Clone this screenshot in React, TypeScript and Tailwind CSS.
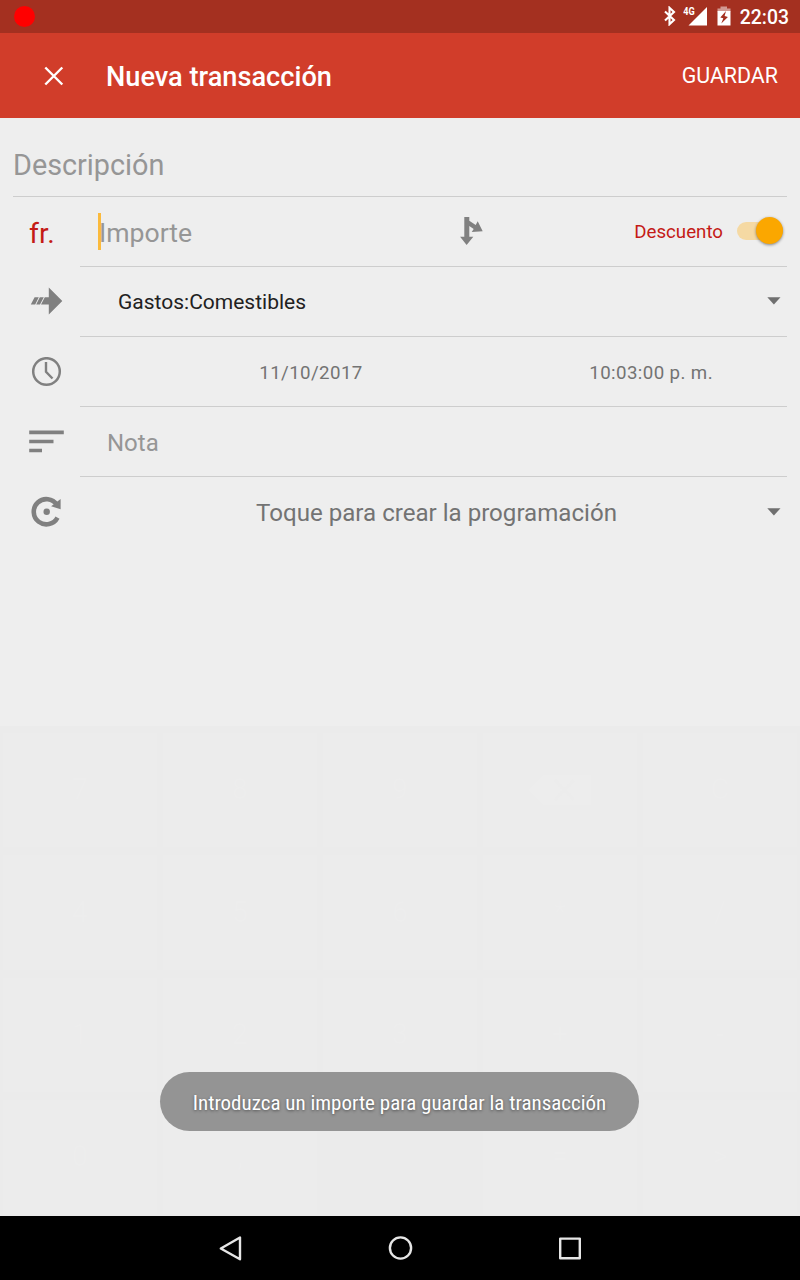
import type { ReactNode } from 'react';

const keys = ['7', '8', '9', 'back', 'C', '4', '5', '6', '*', '/', '1', '2', '3', '+', '-', '0', ',', '', '=', '>'];

function StatusBar() {
  return (
    <div className="flex h-[33px] shrink-0 items-center justify-between bg-[#a43020] pl-[13.5px] pr-[11px]">
      <div className="h-[21px] w-[21px] rounded-full bg-[#ff0000]" />
      <div className="flex items-center">
        <svg className="-mt-px mr-[6px] h-[20px] w-[14px]" viewBox="0 0 14 20">
          <path d="M2 5.5 11 14 6.5 18.2V1.8L11 6 2 14.5" fill="none" stroke="#fff" strokeWidth="2.1" />
        </svg>
        <svg className="-mt-px mr-[9px] h-[22px] w-[25px]" viewBox="0 0 25 22">
          <path d="M5.5 20.5H24V2Z" fill="#fff" />
          <path d="M0 0H12V11.5H0Z" fill="#a43020" />
          <text x="0.3" y="9.9" fontSize="10.6" fontWeight="700" fill="#fff" fontFamily="Roboto, sans-serif" textLength="11.5" lengthAdjust="spacingAndGlyphs">4G</text>
        </svg>
        <svg className="-mt-px mr-[8.5px] h-[20px] w-[14px]" viewBox="0 0 14 20">
          <path d="M3.5 0.5h6.5v2h3.5v3H0.5v-3h3z" fill="#d19a92" />
          <path d="M0.5 5h13v14.5H0.5z" fill="#fff" />
          <path d="M9 5 3.3 11.5 6.3 12.2 4.3 17.5 10.9 10.9 7.6 10Z" fill="#a43020" />
        </svg>
        <span className="mt-[2px] text-[19.4px] font-medium leading-none text-white">22:03</span>
      </div>
    </div>
  );
}

function AppBar() {
  return (
    <header className="flex h-[85px] shrink-0 items-center bg-[#d13d2a] pl-[44px] pr-[22px] text-white">
      <svg className="h-5 w-5" viewBox="0 0 20 20">
        <path d="M1.3 1.5 18.3 18.5M18.3 1.5 1.3 18.5" stroke="#fff" strokeWidth="2.4" />
      </svg>
      <h1 className="ml-[42px] mt-[5px] flex-1 text-[27.2px] font-medium leading-none">Nueva transacción</h1>
      <button className="text-[21.4px] leading-none">GUARDAR</button>
    </header>
  );
}

function Row({ icon, children, last = false }: { icon: ReactNode; children: ReactNode; last?: boolean }) {
  return (
    <div className="flex h-[70px] px-[13px]">
      <div className="flex w-[67px] items-center">{icon}</div>
      <div className={last ? 'flex flex-1 items-center' : 'flex flex-1 items-center border-b border-[#cdcdcd]'}>{children}</div>
    </div>
  );
}

function Caret() {
  return (
    <svg className="mr-[6px] h-[8px] w-[14px]" viewBox="0 0 14 8">
      <path d="M0.3 0.3h13.2L6.9 7.6Z" fill="#6f6f6f" />
    </svg>
  );
}

const arrowIcon = (
  <svg className="-mt-[2px] ml-[17px] h-[28px] w-[33px]" viewBox="0 0 33 28">
    <path d="M18.8 0.5 32.3 14 18.8 27.5V17.5H11L14.8 10.3H18.8ZM4.6 10.3H8.8L5.2 17.5H0.8ZM9.8 10.3H13.8L10 17.5H6.2Z" fill="#808080" />
  </svg>
);

const clockIcon = (
  <svg className="-mt-px ml-[18px] h-[30px] w-[31px]" viewBox="0 0 31 30">
    <circle cx="15.5" cy="14.5" r="13.3" fill="none" stroke="#808080" strokeWidth="2.5" />
    <path d="M15 5V14.8L21.5 21.5" fill="none" stroke="#808080" strokeWidth="2.4" />
  </svg>
);

const noteIcon = (
  <svg className="-mt-px ml-[16px] h-[24px] w-[35px]" viewBox="0 0 35 24">
    <path d="M0.2 0.6h34.6v3.6H0.2zM0.2 9.8h24.3v3.4H0.2zM0.2 18.8h12.8v3.4H0.2z" fill="#808080" />
  </svg>
);

const repeatIcon = (
  <svg className="ml-[18px] h-[32px] w-[32px]" viewBox="0 0 32 32">
    <path d="M25.9 8.8A12.6 12.6 0 1 0 26.5 21.6" fill="none" stroke="#808080" strokeWidth="4.6" />
    <path d="M29.6 3V13.2L20.1 10.2Z" fill="#808080" />
    <circle cx="15.7" cy="15.8" r="3.2" fill="#808080" />
  </svg>
);

function Keypad() {
  return (
    <div className="grid h-[490px] shrink-0 grid-cols-5 grid-rows-4 gap-x-[6px] gap-y-[8px] bg-[#ebebeb] px-[3px] pb-[2px] pt-[7px]">
      {keys.map((key, index) => (
        <div key={index} className={key === '' ? 'bg-[#ebebeb]' : 'flex items-center justify-center bg-[#ececec] text-[29px] text-[#ededed]'}>
          {key === 'back' ? (
            <svg className="h-[30px] w-[62px]" viewBox="0 0 62 30">
              <path d="M0 15 15 0H62V30H15Z" fill="#ededed" />
              <path d="M26 5 45 25M45 5 26 25" stroke="#ececec" strokeWidth="3" />
            </svg>
          ) : (
            key
          )}
        </div>
      ))}
    </div>
  );
}

export default function App() {
  return (
    <div className="relative flex h-[1280px] w-[800px] flex-col overflow-hidden bg-[#eeeeee] font-[Roboto,sans-serif]">
      <StatusBar />
      <AppBar />
      <main className="flex flex-1 flex-col">
        <div className="mx-[13px] flex h-[79px] items-center border-b border-[#cdcdcd]">
          <span className="mt-[16px] text-[28.8px] leading-none text-[#969696]">Descripción</span>
        </div>
        <Row icon={<span className="ml-[16px] mt-[4px] text-[28.5px] leading-none tracking-[0.2px] text-[#c41a16]">fr.</span>}>
          <div className="flex w-[379px] items-center">
            <div className="ml-[18px] h-[37px] w-[3px] bg-[#fbba3c]" />
            <span className="-ml-[2px] mt-[4px] text-[26.6px] leading-none text-[#969696]">Importe</span>
          </div>
          <svg className="-mt-px h-[30px] w-[25px]" viewBox="0 0 25 30">
            <path d="M5.3 1h5v3.8l6.4 4.2 2-3.7 5 10-11 .8 2-3.2-4.4-2.8v10.6h4L7.6 29 1.1 20.7h4.2z" fill="#808080" />
          </svg>
          <span className="ml-auto mt-[2px] text-[18.7px] leading-none text-[#c41a16]">Descuento</span>
          <div className="-mt-[2px] ml-[14px] mr-[4px] flex h-[18px] w-[46px] items-center justify-end rounded-full bg-[#f5d9a3]">
            <div className="h-[27px] w-[27px] shrink-0 rounded-full bg-[#fba700] shadow-[0_1px_3px_rgba(0,0,0,0.45)]" />
          </div>
        </Row>
        <Row icon={arrowIcon}>
          <span className="ml-[38px] mt-px flex-1 text-[21px] leading-none text-[#212121]">Gastos:Comestibles</span>
          <div className="-mt-[2px] flex">
            <Caret />
          </div>
        </Row>
        <Row icon={clockIcon}>
          <span className="mt-[3px] w-[462px] text-center text-[18.7px] leading-none tracking-[0.4px] text-[#737373]">11/10/2017</span>
          <span className="mt-[3px] flex-1 pr-[74px] text-right text-[18.7px] leading-none tracking-[0.4px] text-[#737373]">10:03:00 p. m.</span>
        </Row>
        <Row icon={noteIcon}>
          <span className="ml-[27px] mt-[3px] text-[24px] leading-none text-[#969696]">Nota</span>
        </Row>
        <Row icon={repeatIcon} last>
          <span className="mt-[3px] flex-1 pl-[26px] text-center text-[24.1px] leading-none text-[#737373]">Toque para crear la programación</span>
          <Caret />
        </Row>
      </main>
      <Keypad />
      <nav className="flex h-16 shrink-0 items-center justify-center bg-black">
        <svg className="h-16 w-[400px]" viewBox="0 0 400 64" fill="none" stroke="#e6e6e6" strokeWidth="2.4" strokeLinejoin="round">
          <path d="M40 21.5V43.3L20.8 32.5Z" />
          <circle cx="200.5" cy="32" r="10.6" />
          <path d="M360.2 22.6h19.6v19.6h-19.6z" />
        </svg>
      </nav>
      <div className="absolute left-[160px] top-[1072px] flex h-[59px] w-[479px] items-center justify-center rounded-full bg-[#949494]">
        <span className="mt-[3px] whitespace-nowrap text-[21px] leading-none text-white [font-stretch:75%] [font-family:'Roboto_Condensed',Roboto,sans-serif] [text-shadow:0_1px_3px_rgba(0,0,0,0.45)]">
          Introduzca un importe para guardar la transacción
        </span>
      </div>
    </div>
  );
}
